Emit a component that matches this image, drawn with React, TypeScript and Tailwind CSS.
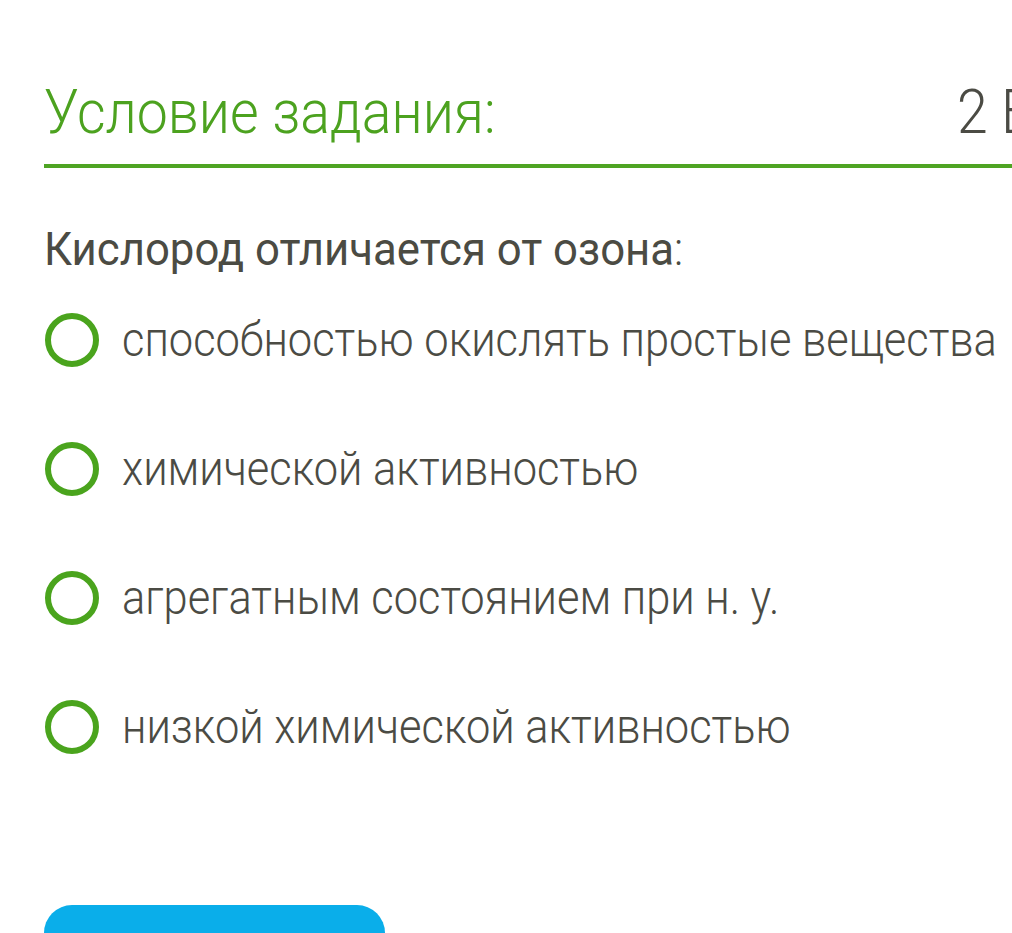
import React from "react";

const options = [
  "способностью окислять простые вещества",
  "химической активностью",
  "агрегатным состоянием при н. у.",
  "низкой химической активностью",
];

export default function App() {
  return (
    <div
      className="w-[1012px] h-[933px] overflow-hidden bg-white"
      style={{ fontFamily: "Roboto, 'Noto Sans', sans-serif" }}
    >
      <div className="pl-[44px]">
        <div className="flex pt-[76px] pb-[16px] border-b-4 border-[#4ea423] whitespace-nowrap">
          <div className="w-[913px] shrink-0">
            <span className="inline-block origin-left scale-x-[0.894] text-[62px] leading-[72px] font-light text-[#4ca21f]">
              Условие задания:
            </span>
          </div>
          <span className="inline-block origin-left scale-x-[0.894] text-[62px] leading-[72px] font-light text-[#4b4b44]">
            2 Балла
          </span>
        </div>

        <div className="mt-[54px] whitespace-nowrap">
          <span className="inline-block origin-left scale-x-[0.95] text-[46px] leading-[54px] font-normal text-[#4b4b43]">
            Кислород отличается от озона<span className="font-light">:</span>
          </span>
        </div>

        <div className="mt-[36px] flex flex-col gap-[73px]">
          {options.map((o) => (
            <div key={o} className="flex items-center h-[56px] whitespace-nowrap">
              <div className="ml-px w-[54px] h-[54px] rounded-full border-[6px] border-[#4aa41d] shrink-0" />
              <span className="ml-[23px] inline-block origin-left scale-x-[0.886] text-[49px] leading-[56px] font-light text-[#4b4b44]">
                {o}
              </span>
            </div>
          ))}
        </div>

        <div className="mt-[150px] w-[341px] h-[70px] rounded-[28px] bg-[#0aaeea]" />
      </div>
    </div>
  );
}
